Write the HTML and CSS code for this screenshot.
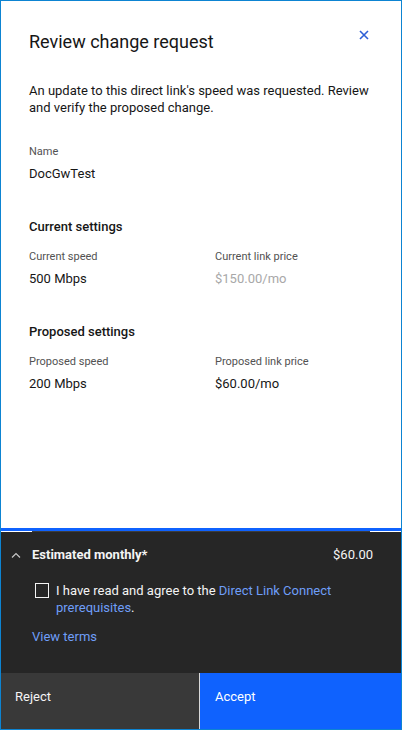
FILE: index.html
```html
<!DOCTYPE html>
<html lang="en">
<head>
<meta charset="utf-8">
<title>Review change request</title>
<link rel="stylesheet" href="styles.css">
</head>
<body>
<div class="panel">
  <main class="content">
    <header class="head">
      <h1 class="title">Review change request</h1>
      <button class="close" aria-label="Close">
        <svg width="10" height="10" viewBox="0 0 10 10"><path d="M1 1 L9 9 M9 1 L1 9" stroke="#2d5fd6" stroke-width="1.6" fill="none"/></svg>
      </button>
    </header>
    <p class="desc">An update to this direct link's speed was requested. Review and verify the proposed change.</p>

    <div class="field">
      <div class="label">Name</div>
      <div class="value">DocGwTest</div>
    </div>

    <h2 class="section">Current settings</h2>
    <div class="grid">
      <div class="field">
        <div class="label">Current speed</div>
        <div class="value">500 Mbps</div>
      </div>
      <div class="field">
        <div class="label">Current link price</div>
        <div class="value muted">$150.00/mo</div>
      </div>
    </div>

    <h2 class="section">Proposed settings</h2>
    <div class="grid">
      <div class="field">
        <div class="label">Proposed speed</div>
        <div class="value">200 Mbps</div>
      </div>
      <div class="field">
        <div class="label">Proposed link price</div>
        <div class="value">$60.00/mo</div>
      </div>
    </div>
  </main>

  <div class="focusbar"></div>
  <div class="divider"><div class="divider-line"></div></div>

  <section class="summary">
    <div class="sum-head">
      <svg class="chev" width="10" height="6" viewBox="0 0 10 6"><path d="M1 5.5 L5 1.5 L9 5.5" stroke="#c6c6c6" stroke-width="1.2" fill="none"/></svg>
      <span class="sum-title">Estimated monthly*</span>
      <span class="sum-price">$60.00</span>
    </div>
    <label class="agree">
      <span class="box"></span>
      <span class="agree-text">I have read and agree to the <a class="link" href="#">Direct Link Connect prerequisites</a>.</span>
    </label>
    <a class="link terms" href="#">View terms</a>
  </section>

  <div class="actions">
    <button class="btn reject">Reject</button>
    <button class="btn accept">Accept</button>
  </div>
</div>
</body>
</html>
```
FILE: styles.css
```css
*{box-sizing:border-box}
html,body{margin:0;padding:0}
body{font-family:Roboto,"Noto Sans",sans-serif;color:#161616;background:#fff}
.panel{width:402px;height:730px;border:1px solid #0d84d2;display:flex;flex-direction:column;background:#fff}
.content{flex:1;padding:29px 28px 0 28px}
.head{display:flex;justify-content:space-between;align-items:flex-start}
.title{margin:0;font-size:18px;font-weight:400;line-height:24px;color:#161616}
.close{border:0;background:none;padding:0;margin:0;width:10px;height:10px;margin-top:0px;margin-right:4px;display:flex}
.desc{margin:28px 0 0;font-size:13px;line-height:17px;color:#161616}
.field{display:flex;flex-direction:column}
.content > .field{margin-top:28px}
.label{font-size:11px;line-height:16px;color:#525252}
.value{font-size:13px;line-height:18px;margin-top:5px;color:#161616}
.value.muted{color:#a8a8a8}
.section{margin:35px 0 0;font-size:13px;font-weight:500;line-height:18px;color:#161616}
.grid{display:grid;grid-template-columns:186px 1fr;margin-top:13px}
.focusbar{height:3px;background:#0f62fe}
.divider{height:1px;background:#fff;padding:0 31px}
.divider-line{height:1px;background:#3d3d3d}
.summary{background:#262626;padding:14px 28px 28px 0;color:#f4f4f4}
.sum-head{display:flex;align-items:center;height:17px}
.chev{margin:0 11px 0 10px;flex:none}
.sum-title{font-size:13px;font-weight:700;line-height:17px;flex:1;color:#f4f4f4}
.sum-price{font-size:13px;line-height:17px;color:#f4f4f4}
.agree{display:flex;align-items:flex-start;margin:19px 0 0 34px;font-size:13px;line-height:17px;color:#f4f4f4}
.box{width:14px;height:15px;border:1.5px solid #f4f4f4;flex:none;margin:1px 7px 0 0}
.link{color:#6f9ef8;text-decoration:none}
.terms{display:block;margin:12px 0 0 31px;font-size:13px;line-height:17px}
.actions{display:flex;height:56px;background:#262626}
.btn{border:0;margin:0;font-family:inherit;font-size:13px;line-height:17px;color:#f4f4f4;text-align:left;padding:15px 14px 0;display:flex;align-items:flex-start;height:56px}
.reject{width:198px;background:#393939}
.accept{flex:1;background:#0f62fe;border-left:1px solid #d8d8d8;padding-left:15px;color:#fff}
```
